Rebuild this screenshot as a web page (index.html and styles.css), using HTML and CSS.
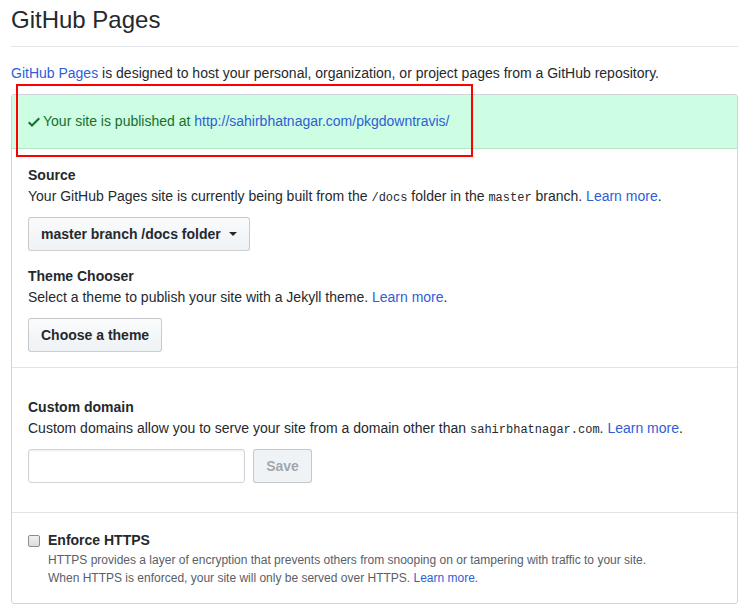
FILE: index.html
```html
<!DOCTYPE html>
<html>
<head>
<meta charset="utf-8">
<link rel="stylesheet" href="styles.css">
</head>
<body>
<div class="page">
  <div class="subhead">
    <h2 class="subhead-heading">GitHub Pages</h2>
  </div>
  <p class="intro"><a href="#">GitHub Pages</a> is designed to host your personal, organization, or project pages from a GitHub repository.</p>
  <div class="box">
    <div class="flash">
      <svg class="check" width="12" height="16" viewBox="0 0 12 16"><path fill="currentColor" d="M12 5l-8 8-4-4 1.5-1.5L4 10l6.5-6.5L12 5z"/></svg>
      <span>Your site is published at <a href="#">http://sahirbhatnagar.com/pkgdowntravis/</a></span>
    </div>
    <div class="row">
      <div class="group">
        <h4 class="label">Source</h4>
        <p class="desc">Your GitHub Pages site is currently being built from the <code>/docs</code> folder in the <code>master</code> branch. <a href="#">Learn more</a>.</p>
        <button class="btn">master branch /docs folder <span class="caret"></span></button>
      </div>
      <div class="group group-next">
        <h4 class="label">Theme Chooser</h4>
        <p class="desc">Select a theme to publish your site with a Jekyll theme. <a href="#">Learn more</a>.</p>
        <button class="btn">Choose a theme</button>
      </div>
    </div>
    <div class="row row-domain">
      <h4 class="label">Custom domain</h4>
      <p class="desc">Custom domains allow you to serve your site from a domain other than <code>sahirbhatnagar.com</code>. <a href="#">Learn more</a>.</p>
      <div class="domain-form">
        <input class="input" type="text">
        <button class="btn btn-disabled">Save</button>
      </div>
    </div>
    <div class="row row-https">
      <div class="checkline">
        <span class="checkbox"></span>
        <div class="check-body">
          <h4 class="label">Enforce HTTPS</h4>
          <p class="note">HTTPS provides a layer of encryption that prevents others from snooping on or tampering with traffic to your site.<br>When HTTPS is enforced, your site will only be served over HTTPS. <a href="#">Learn more</a>.</p>
        </div>
      </div>
    </div>
  </div>
  <div class="annotation"></div>
</div>
</body>
</html>
```

FILE: styles.css
```css
* { box-sizing: border-box; }
html, body { margin: 0; padding: 0; background: #fff; }
body {
  font-family: "Liberation Sans", Arial, sans-serif;
  font-size: 14px;
  line-height: 1.5;
  color: #24292e;
}
a { color: #2f5ed6; text-decoration: none; }
code {
  font-family: "Liberation Mono", monospace;
  font-size: 12px;
}
.page {
  position: relative;
  width: 727px;
  margin-left: 11px;
  padding-top: 2px;
}
.subhead {
  border-bottom: 1px solid #e1e4e8;
  padding-bottom: 8px;
  margin-bottom: 16px;
}
.subhead-heading {
  margin: 0;
  font-size: 24px;
  font-weight: normal;
  line-height: 36px;
}
.intro { margin: 0 0 10px; }
.box {
  border: 1px solid #d1d5da;
  border-radius: 3px;
}
.flash {
  display: flex;
  align-items: center;
  padding: 16px;
  background: #cdfde3;
  color: #176f2c;
  border-bottom: 1px solid #b4e3c6;
  border-radius: 3px 3px 0 0;
}
.check { margin-right: 3px; flex: none; }
.row {
  padding: 16px 16px 15px;
  border-bottom: 1px solid #e1e4e8;
}
.row:last-child { border-bottom: 0; }
.label {
  margin: 0;
  font-size: 14px;
  font-weight: bold;
  line-height: 21px;
}
.desc { margin: 0 0 10px; }
.group-next { margin-top: 15px; }
.btn {
  display: inline-flex;
  align-items: center;
  font-family: inherit;
  font-size: 14px;
  font-weight: bold;
  line-height: 20px;
  color: #24292e;
  padding: 6px 12px;
  border: 1px solid rgba(27,31,35,0.2);
  border-radius: 3px;
  background: linear-gradient(#fafbfc, #eff3f6 90%);
  height: 34px;
}
.caret {
  display: inline-block;
  width: 0;
  height: 0;
  margin-left: 8px;
  border-top: 4px solid #24292e;
  border-left: 4px solid transparent;
  border-right: 4px solid transparent;
}
.row-domain { padding-top: 29px; padding-bottom: 29px; }
.domain-form { display: flex; gap: 8px; }
.input {
  width: 217px;
  height: 34px;
  border: 1px solid #d1d5da;
  border-radius: 3px;
  box-shadow: inset 0 1px 2px rgba(27,31,35,0.075);
  background: #fff;
  margin: 0;
}
.btn-disabled {
  color: rgba(36,41,46,0.4);
  background: #eff3f6;
  border-color: rgba(27,31,35,0.2);
  width: 59px;
  justify-content: center;
}
.row-https { padding-top: 17px; padding-bottom: 16px; }
.checkline { display: flex; align-items: flex-start; }
.checkbox {
  flex: none;
  width: 12px;
  height: 12px;
  margin-top: 5px;
  margin-right: 8px;
  border: 1px solid #8d8d8d;
  border-radius: 2px;
  background: linear-gradient(#f2f2f2, #dcdcdc);
}
.note {
  margin: 0;
  font-size: 12px;
  line-height: 18px;
  color: #586069;
}
.annotation {
  position: absolute;
  left: 5px;
  top: 84px;
  width: 457px;
  height: 73px;
  border: 2px solid #f00;
  pointer-events: none;
}
```
